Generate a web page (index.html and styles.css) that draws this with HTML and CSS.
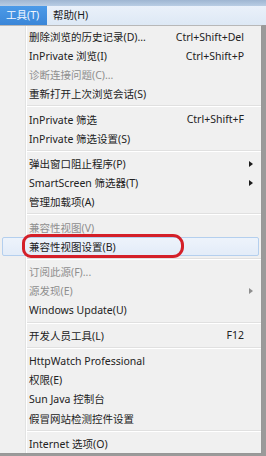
FILE: index.html
```html
<!DOCTYPE html>
<html>
<head>
<meta charset="utf-8">
<link rel="stylesheet" href="styles.css">
</head>
<body>
<div class="frame"></div>
<div class="menubar">
  <div class="top-item active">工具(T)</div>
  <div class="top-item">帮助(H)</div>
</div>
<div class="menu">
  <div class="item"><span class="label">删除浏览的历史记录(D)...</span><span class="key">Ctrl+Shift+Del</span><span class="arr"></span></div>
  <div class="item"><span class="label">InPrivate 浏览(I)</span><span class="key">Ctrl+Shift+P</span><span class="arr"></span></div>
  <div class="item disabled"><span class="label">诊断连接问题(C)...</span><span class="arr"></span></div>
  <div class="item"><span class="label">重新打开上次浏览会话(S)</span><span class="arr"></span></div>
  <div class="sep"></div>
  <div class="item"><span class="label">InPrivate 筛选</span><span class="key">Ctrl+Shift+F</span><span class="arr"></span></div>
  <div class="item"><span class="label">InPrivate 筛选设置(S)</span><span class="arr"></span></div>
  <div class="sep"></div>
  <div class="item"><span class="label">弹出窗口阻止程序(P)</span><span class="arr sub"></span></div>
  <div class="item"><span class="label">SmartScreen 筛选器(T)</span><span class="arr sub"></span></div>
  <div class="item"><span class="label">管理加载项(A)</span><span class="arr"></span></div>
  <div class="sep"></div>
  <div class="item disabled"><span class="label">兼容性视图(V)</span><span class="arr"></span></div>
  <div class="item hover"><span class="label">兼容性视图设置(B)</span><span class="arr"></span></div>
  <div class="sep"></div>
  <div class="item disabled"><span class="label">订阅此源(F)...</span><span class="arr"></span></div>
  <div class="item disabled"><span class="label">源发现(E)</span><span class="arr sub"></span></div>
  <div class="item"><span class="label">Windows Update(U)</span><span class="arr"></span></div>
  <div class="sep"></div>
  <div class="item"><span class="label">开发人员工具(L)</span><span class="key">F12</span><span class="arr"></span></div>
  <div class="sep"></div>
  <div class="item"><span class="label">HttpWatch Professional</span><span class="arr"></span></div>
  <div class="item"><span class="label">权限(E)</span><span class="arr"></span></div>
  <div class="item"><span class="label">Sun Java 控制台</span><span class="arr"></span></div>
  <div class="item"><span class="label">假冒网站检测控件设置</span><span class="arr"></span></div>
  <div class="sep"></div>
  <div class="item"><span class="label">Internet 选项(O)</span><span class="arr"></span></div>
</div>
<div class="mark"></div>
</body>
</html>
```

FILE: styles.css
```css
html, body {
  margin: 0;
  padding: 0;
}
body {
  width: 266px;
  height: 456px;
  overflow: hidden;
  background: #9a9a9a;
  font-family: "Noto Sans", "Noto Sans CJK SC", sans-serif;
  font-size: 10.5px;
  color: #222222;
  position: relative;
}
.frame {
  height: 6px;
  background: linear-gradient(#9fb6d2, #b9cde4);
}
.menubar {
  height: 19px;
  display: flex;
  background: linear-gradient(#eaf1fa, #dde8f5);
}
.top-item {
  padding: 0 6px;
  line-height: 19px;
  color: #1b1b1b;
}
.top-item.active {
  width: 35px;
  background: linear-gradient(#4b9ae8, #3a86d8);
  color: #f4f8ff;
}
.menu {
  width: 262px;
  height: 429px;
  box-sizing: border-box;
  border-right: 1px solid #979797;
  border-bottom: 1px solid #979797;
  border-top: 1px solid #b8b8b8;
  padding: 1px 0 0 0;
  background: linear-gradient(to right, #f0f0f0 25px, #e2e3e3 25px 26px, #ffffff 26px 27px, #f0f0f0 27px);
}
.item {
  height: 19.1px;
  display: flex;
  align-items: center;
  padding-left: 29px;
  padding-right: 3px;
  box-sizing: border-box;
  white-space: nowrap;
}
.item.disabled {
  color: #8e8e8e;
}
.item.hover {
  margin: 0 2px;
  padding-left: 26px;
  padding-right: 1px;
  border: 1px solid #b4cfee;
  border-radius: 2px;
  background: linear-gradient(#edf3fb, #e3ecf8);
}
.label {
  flex: 1;
}
.key {
  text-align: right;
}
.arr {
  width: 14px;
  height: 8px;
  display: flex;
  justify-content: center;
  align-items: center;
}
.arr.sub::after {
  content: "";
  border-left: 4px solid #1b1b1b;
  border-top: 3.5px solid transparent;
  border-bottom: 3.5px solid transparent;
}
.disabled .arr.sub::after {
  border-left-color: #8e8e8e;
}
.sep {
  height: 6.3px;
  box-sizing: border-box;
  padding-top: 2px;
  margin-left: 27px;
}
.sep::before {
  content: "";
  display: block;
  height: 1px;
  background: #e0e0e0;
  border-bottom: 1px solid #ffffff;
}
.mark {
  position: absolute;
  left: 22px;
  top: 234px;
  width: 156px;
  height: 18px;
  border: 3px solid #d42029;
  border-radius: 9px 11px 11px 9px;
}
```
